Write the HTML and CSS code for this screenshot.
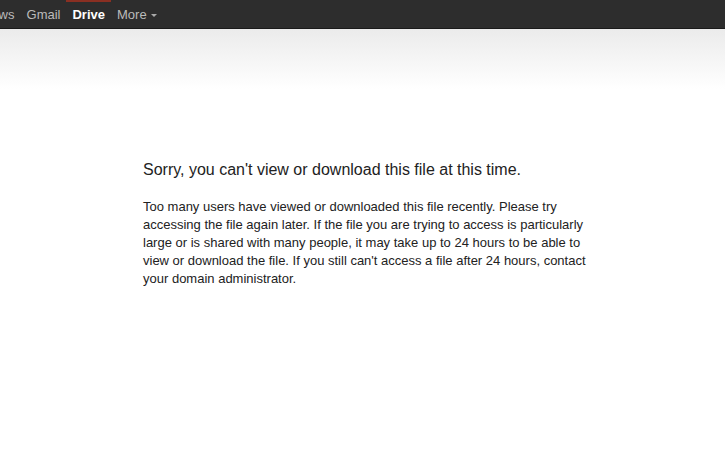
FILE: index.html
```html
<!DOCTYPE html>
<html lang="en">
    <head>
        <meta charset="utf-8">
        <title>Google Drive - file unavailable</title>
        <link rel="stylesheet" href="styles.css">
    </head>
  <body>
      <header class="topbar">
        <nav class="gbar">
          <a href="#" class="gb-link">News</a>
          <a href="#" class="gb-link">Gmail</a>
          <a href="#" class="gb-link gb-active">Drive</a>
          <a href="#" class="gb-link">More <span class="caret"></span></a>
        </nav>
      </header>
      <div class="shade"></div>
      <main class="content">
        <h1 class="title">Sorry, you can't view or download this file at this time.</h1>
        <p class="msg">Too many users have viewed or downloaded this file recently. Please try accessing the file again later. If the file you are trying to access is particularly large or is shared with many people, it may take up to 24 hours to be able to view or download the file. If you still can't access a file after 24 hours, contact your domain administrator.</p>
      </main>
  </body>
</html>
```

FILE: styles.css
```css
body{
    margin: 0;
    background-color: #fff;
    font-family: Arial, "Liberation Sans", sans-serif;
}
.topbar{
    background-color: #2d2d2d;
    height: 28px;
    border-bottom: 1px solid #1a1a1a;
}
.gbar{
    display: flex;
    height: 28px;
    margin-left: -24px;
}
.gb-link{
    position: relative;
    color: #bbb;
    text-decoration: none;
    font-size: 13px;
    line-height: 30px;
    padding: 0 6px;
}
.gb-active{
    color: #fff;
    font-weight: bold;
}
.gb-active::before{
    content: "";
    position: absolute;
    left: 0;
    right: 0;
    top: 0;
    height: 2px;
    background-color: #8a2f22;
}
.caret{
    display: inline-block;
    vertical-align: middle;
    border-left: 3px solid transparent;
    border-right: 3px solid transparent;
    border-top: 3px solid #aaa;
    margin-left: 1px;
}
.shade{
    height: 60px;
    background: linear-gradient(#ebebeb, #fff);
}
.content{
    width: 445px;
    margin-left: 143px;
    padding-top: 72px;
    color: #222;
}
.title{
    font-size: 16px;
    font-weight: normal;
    margin: 0 0 19px 0;
}
.msg{
    font-size: 13px;
    line-height: 18px;
    margin: 0;
}
```
